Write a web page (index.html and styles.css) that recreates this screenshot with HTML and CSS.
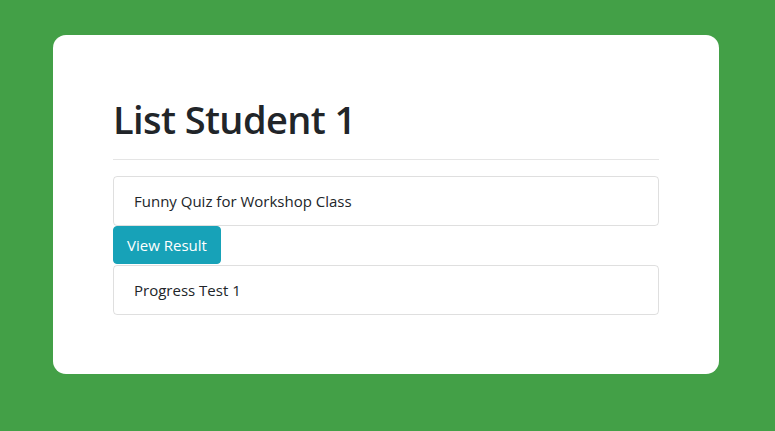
FILE: index.html
```html
<!DOCTYPE html>
<html>
<head>
<meta charset="utf-8">
<link rel="stylesheet" href="styles.css">
</head>
<body>
<div class="card">
  <h1 class="title">List Student 1</h1>
  <hr class="rule">
  <ul class="list">
    <li class="item">Funny Quiz for Workshop Class</li>
  </ul>
  <button class="btn">View Result</button>
  <ul class="list">
    <li class="item">Progress Test 1</li>
  </ul>
</div>
</body>
</html>
```
FILE: styles.css
```css
html, body {
  margin: 0;
  padding: 0;
}
body {
  background: #43a047;
  font-family: "Open Sans", "Noto Sans", sans-serif;
  color: #212529;
  padding: 35px 56px 57px 53px;
  min-height: 431px;
  box-sizing: border-box;
}
.card {
  width: 666px;
  height: 339px;
  box-sizing: border-box;
  background: #fff;
  border-radius: 13px;
  padding: 60px;
}
.title {
  margin: 0 0 8px 0;
  font-size: 38px;
  font-weight: 600;
  line-height: 48px;
  letter-spacing: -0.6px;
}
.rule {
  margin: 16px 0;
  border: 0;
  border-top: 1px solid rgba(0,0,0,0.1);
  height: 0;
}
.list {
  list-style: none;
  margin: 0;
  padding: 0;
}
.item {
  border: 1px solid rgba(0,0,0,0.125);
  border-radius: 4px;
  padding: 12px 20px;
  font-size: 15px;
  line-height: 24px;
}
.btn {
  display: block;
  font-family: inherit;
  background: #17a2b8;
  color: #fff;
  border: 1px solid #17a2b8;
  border-radius: 4px;
  padding: 6px 12px;
  font-size: 15px;
  line-height: 24px;
  margin: 0 0 1px 0;
  width: 108px;
  height: 38px;
}
```
